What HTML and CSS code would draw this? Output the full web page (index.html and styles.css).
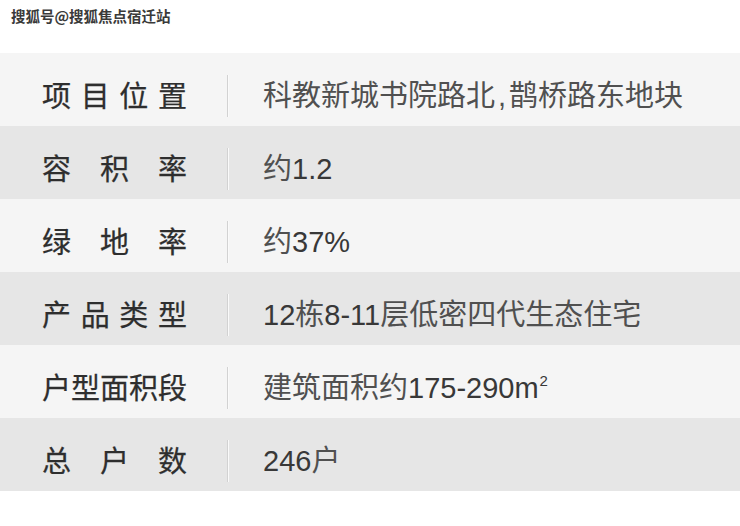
FILE: index.html
```html
<!DOCTYPE html>
<html lang="zh-CN">
<head>
<meta charset="utf-8">
<title>项目信息</title>
<link rel="stylesheet" href="styles.css">
</head>
<body>
<header class="mark">搜狐号@搜狐焦点宿迁站</header>
<section class="table">
  <div class="row light">
    <div class="label">项目位置</div>
    <div class="divider"></div>
    <div class="value">科教新城书院路北<span class="comma">,</span>鹊桥路东地块</div>
  </div>
  <div class="row dark">
    <div class="label">容积率</div>
    <div class="divider"></div>
    <div class="value">约<span class="num">1.2</span></div>
  </div>
  <div class="row light">
    <div class="label">绿地率</div>
    <div class="divider"></div>
    <div class="value">约<span class="num">37%</span></div>
  </div>
  <div class="row dark">
    <div class="label">产品类型</div>
    <div class="divider"></div>
    <div class="value"><span class="num">12</span>栋<span class="num">8-11</span>层低密四代生态住宅</div>
  </div>
  <div class="row light">
    <div class="label">户型面积段</div>
    <div class="divider"></div>
    <div class="value">建筑面积约<span class="num">175-290m</span><sup class="sq">2</sup></div>
  </div>
  <div class="row dark">
    <div class="label">总户数</div>
    <div class="divider"></div>
    <div class="value"><span class="num">246</span>户</div>
  </div>
</section>
</body>
</html>
```
FILE: styles.css
```css
html, body {
  margin: 0;
  padding: 0;
  background: #ffffff;
}

body {
  width: 740px;
  height: 526px;
  overflow: hidden;
  font-family: "Liberation Sans", "Noto Sans CJK SC", sans-serif;
}

.mark {
  height: 53px;
  box-sizing: border-box;
  padding: 6px 0 0 11px;
  font-family: "Noto Sans CJK SC", sans-serif;
  font-size: 14.5px;
  line-height: 20px;
  font-weight: 700;
  color: #3a3a3a;
  text-shadow: 0 0 2px #ffffff, 0 0 1px #ffffff;
}

.table {
  display: flex;
  flex-direction: column;
}

.row {
  display: flex;
  align-items: center;
  height: 73px;
  box-sizing: border-box;
  padding: 22px 0 9px 42px;
}

.light {
  background: #f5f5f5;
}

.dark {
  background: #e6e6e6;
}

.label {
  width: 145px;
  margin-top: -4px;
  font-family: "Noto Sans CJK SC", sans-serif;
  font-size: 29px;
  line-height: 42px;
  font-weight: 400;
  color: #2e2e2e;
  -webkit-text-stroke: 0.25px #2e2e2e;
  text-align: justify;
  text-align-last: justify;
  white-space: nowrap;
}

.divider {
  width: 1px;
  height: 42px;
  margin-left: 40px;
  background: #d2d2d2;
  box-shadow: 1px 0 0 #fafafa;
}

.value {
  margin-left: 35px;
  margin-top: -4px;
  font-family: "Noto Sans CJK SC", sans-serif;
  font-size: 29px;
  line-height: 42px;
  font-weight: 400;
  color: #505050;
  white-space: nowrap;
}

.num {
  font-family: "Liberation Sans", sans-serif;
  color: #383838;
}

.comma {
  font-family: "Liberation Sans", sans-serif;
  display: inline-block;
  width: 14px;
  padding-left: 3px;
  box-sizing: border-box;
}

.sq {
  font-family: "Liberation Sans", sans-serif;
  font-size: 15px;
  line-height: 0;
  vertical-align: 12px;
  margin-left: 1px;
  color: #383838;
}
```
